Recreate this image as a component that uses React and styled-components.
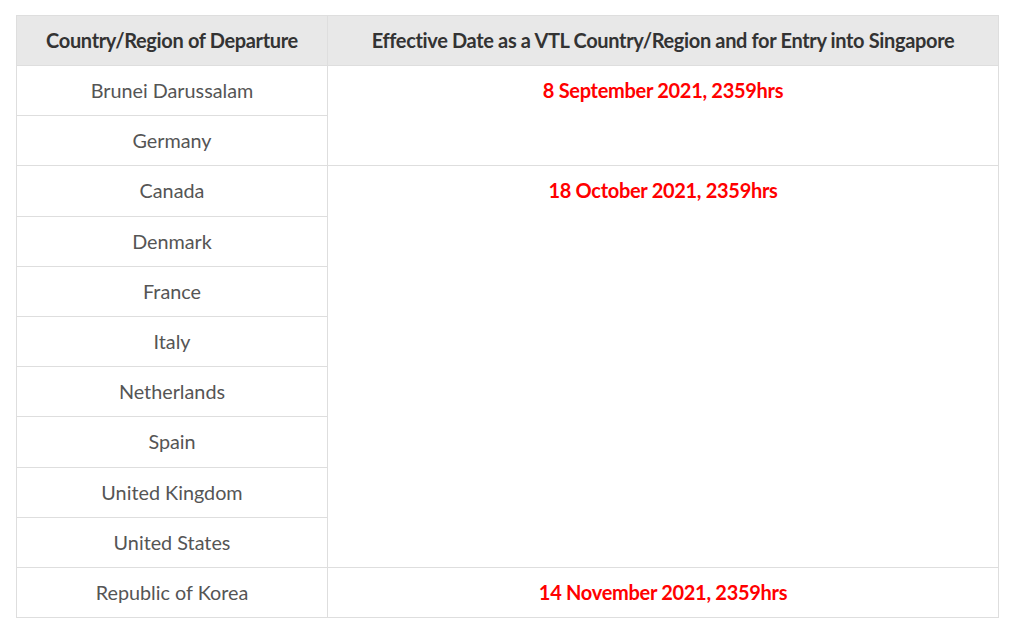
import React from 'react'
import styled, { createGlobalStyle } from 'styled-components'

const GlobalStyle = createGlobalStyle`
    body {
        margin: 0;
        background: #fff;
        font-family: Lato, "Open Sans", sans-serif;
    }
`

const groups = [
    { date: '8 September 2021, 2359hrs', countries: ['Brunei Darussalam', 'Germany'] },
    {
        date: '18 October 2021, 2359hrs',
        countries: ['Canada', 'Denmark', 'France', 'Italy', 'Netherlands', 'Spain', 'United Kingdom', 'United States'],
    },
    { date: '14 November 2021, 2359hrs', countries: ['Republic of Korea'] },
]

const App = () => {
    return (
        <>
            <GlobalStyle />
            <Page>
                <Table>
                    <thead>
                        <tr>
                            <HeadCell $width="311px">Country/Region of Departure</HeadCell>
                            <HeadCell>Effective Date as a VTL Country/Region and for Entry into Singapore</HeadCell>
                        </tr>
                    </thead>
                    <tbody>
                        {groups.map((group) =>
                            group.countries.map((country, i) => (
                                <tr key={country}>
                                    <Cell>{country}</Cell>
                                    {i === 0 && (
                                        <DateCell rowSpan={group.countries.length}>{group.date}</DateCell>
                                    )}
                                </tr>
                            ))
                        )}
                    </tbody>
                </Table>
            </Page>
        </>
    )
}

export default App

const Page = styled.div`
    padding: 15px 25px 0 16px;
`

const Table = styled.table`
    width: 983px;
    border-collapse: collapse;
    table-layout: fixed;
    border: 1px solid #dedede;
`

const HeadCell = styled.th`
    width: ${(p) => p.$width || 'auto'};
    height: 50px;
    box-sizing: border-box;
    background: #e8e8e8;
    color: #333;
    font-size: 20px;
    font-weight: 700;
    letter-spacing: -0.35px;
    text-align: center;
    vertical-align: middle;
    border: 1px solid #dedede;
    padding: 0 8px 1px;
`

const Cell = styled.td`
    height: 50.2px;
    box-sizing: border-box;
    color: #555;
    font-size: 19.8px;
    text-align: center;
    vertical-align: middle;
    border: 1px solid #dedede;
    padding: 0 8px 1px;
`

const DateCell = styled.td`
    color: #ff0000;
    font-size: 20px;
    font-weight: 700;
    letter-spacing: -0.3px;
    text-align: center;
    vertical-align: top;
    border: 1px solid #dedede;
    padding: 11px 8px 0;
    line-height: 26px;
`
